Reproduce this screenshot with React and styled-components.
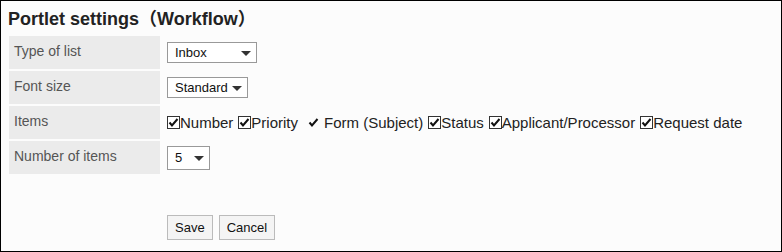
import React from 'react';
import styled, { createGlobalStyle } from 'styled-components';

const GlobalStyle = createGlobalStyle`
  html, body {
    margin: 0;
    padding: 0;
  }
  body {
    font-family: 'Liberation Sans', Arial, sans-serif;
    background: #fcfcfc;
  }
  * { box-sizing: border-box; }
`;

const Frame = styled.div`
  width: 782px;
  height: 252px;
  border: 1px solid #000;
  background: #fcfcfc;
  padding: 7px 8px 0 8px;
  display: flex;
  flex-direction: column;
`;

const Title = styled.h2`
  margin: 0 0 5px -1px;
  font-family: 'Liberation Sans', 'Noto Sans CJK JP', Arial, sans-serif;
  font-size: 18px;
  font-weight: 700;
  line-height: 23px;
  color: #222;
`;

const Table = styled.div`
  display: grid;
  grid-template-columns: 151px 1fr;
  grid-auto-rows: 33px;
  row-gap: 2px;
  column-gap: 7px;
`;

const Label = styled.div`
  background: #ebebeb;
  color: #555;
  font-size: 14px;
  line-height: 16px;
  padding: 7px 5px;
`;

const Value = styled.div`
  display: flex;
  align-items: center;
  color: #222;
`;

const Select = styled.div`
  display: flex;
  align-items: center;
  justify-content: space-between;
  width: ${(p) => p.$width}px;
  height: ${(p) => p.$height || 21}px;
  border: 1px solid #999;
  background: #fff;
  padding: 0 5px 0 7px;
  font-size: 13px;
  color: #111;
  white-space: nowrap;
`;

const Caret = styled.span`
  flex: none;
  width: 0;
  height: 0;
  margin-left: 4px;
  border-left: 5px solid transparent;
  border-right: 5px solid transparent;
  border-top: 5px solid #333;
  margin-top: 1px;
`;

const Checks = styled.div`
  display: flex;
  align-items: center;
  gap: 5px;
  white-space: nowrap;
`;

const CheckItem = styled.label`
  display: flex;
  align-items: center;
  font-size: 15px;
  color: #222;
`;

const BoxWrap = styled.span`
  display: inline-flex;
  width: 13px;
  height: 13px;
  margin-left: ${(p) => (p.$bare ? 4 : 0)}px;
  margin-right: ${(p) => (p.$bare ? 4 : 0)}px;
`;

const Buttons = styled.div`
  display: flex;
  gap: 6px;
  margin-top: 41px;
  margin-left: 158px;
`;

const Button = styled.button`
  height: 25px;
  padding: 0 7px;
  border: 1px solid #bbb;
  background: #f4f4f4;
  font-family: 'Liberation Sans', Arial, sans-serif;
  font-size: 13px;
  color: #111;
  border-radius: 0;
`;

function CheckBox({ bare }) {
  return (
    <BoxWrap $bare={bare}>
      <svg width="13" height="13" viewBox="0 0 13 13">
        {!bare && <rect x="0.5" y="0.5" width="12" height="12" fill="#fff" stroke="#333" />}
        <path d="M2.5 6.5 L5 9.5 L10.5 3" fill="none" stroke="#111" strokeWidth="2" />
      </svg>
    </BoxWrap>
  );
}

const items = [
  { label: 'Number' },
  { label: 'Priority' },
  { label: 'Form (Subject)', bare: true },
  { label: 'Status' },
  { label: 'Applicant/Processor' },
  { label: 'Request date' },
];

export default function App() {
  return (
    <>
      <GlobalStyle />
      <Frame>
        <Title>Portlet settings（Workflow）</Title>
        <Table>
          <Label>Type of list</Label>
          <Value>
            <Select $width={90}>Inbox<Caret /></Select>
          </Value>
          <Label>Font size</Label>
          <Value>
            <Select $width={81}>Standard<Caret /></Select>
          </Value>
          <Label>Items</Label>
          <Value>
            <Checks>
              {items.map((it) => (
                <CheckItem key={it.label}>
                  <CheckBox bare={it.bare} />
                  {it.label}
                </CheckItem>
              ))}
            </Checks>
          </Value>
          <Label>Number of items</Label>
          <Value>
            <Select $width={43} $height={24}>5<Caret /></Select>
          </Value>
        </Table>
        <Buttons>
          <Button>Save</Button>
          <Button>Cancel</Button>
        </Buttons>
      </Frame>
    </>
  );
}
